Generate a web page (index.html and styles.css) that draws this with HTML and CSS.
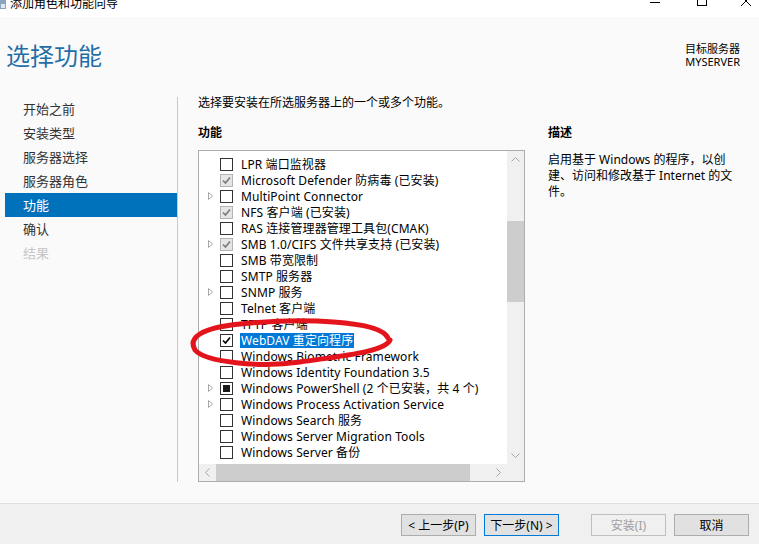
FILE: index.html
```html
<!DOCTYPE html>
<html lang="zh-CN">

<head>
    <meta charset="UTF-8">
    <meta name="viewport" content="width=device-width, initial-scale=1.0">
    <title>添加角色和功能向导</title>
    <link rel="stylesheet" href="styles.css">
</head>

<body>
    <div class="window">
        <!-- 标题栏 (上半部分被截掉) -->
        <div class="titlebar">
            <svg class="app-icon" width="6" height="9" viewBox="0 0 6 9">
                <rect x="0" y="0" width="6" height="9" fill="#8aa4bd" />
                <rect x="1" y="4" width="4" height="4" fill="#dfe8f0" />
            </svg>
            <span class="title-text">添加角色和功能向导</span>
            <svg class="controls" width="119" height="17" viewBox="0 0 119 17">
                <line x1="10" y1="2.5" x2="20" y2="2.5" stroke="#000" stroke-width="1" />
                <rect x="57.5" y="-4.5" width="9" height="10" fill="none" stroke="#000" stroke-width="1" />
                <line x1="101" y1="-4" x2="111" y2="6" stroke="#000" stroke-width="1" />
                <line x1="111" y1="-4" x2="101" y2="6" stroke="#000" stroke-width="1" />
            </svg>
        </div>

        <div class="header">
            <h1 class="page-title">选择功能</h1>
            <div class="target">
                <div>目标服务器</div>
                <div>MYSERVER</div>
            </div>
        </div>

        <div class="main">
            <ul class="steps">
                <li class="step">开始之前</li>
                <li class="step">安装类型</li>
                <li class="step">服务器选择</li>
                <li class="step">服务器角色</li>
                <li class="step active">功能</li>
                <li class="step">确认</li>
                <li class="step disabled">结果</li>
            </ul>

            <div class="content">
                <p class="intro">选择要安装在所选服务器上的一个或多个功能。</p>
                <div class="columns">
                    <div class="features">
                        <h2 class="label">功能</h2>
                        <div class="listbox">
                            <ul class="items">
                                <li class="row"><span class="exp"></span><span class="box"></span><span class="text">LPR 端口监视器</span></li>
                                <li class="row"><span class="exp"></span><span class="box done"><svg viewBox="0 0 11 11"><polyline points="2,5.5 4.5,8 9,2.5" /></svg></span><span class="text">Microsoft Defender 防病毒 (已安装)</span></li>
                                <li class="row"><span class="exp"><svg viewBox="0 0 5 8"><polygon points="0.5,0.5 4.5,4 0.5,7.5" /></svg></span><span class="box"></span><span class="text">MultiPoint Connector</span></li>
                                <li class="row"><span class="exp"></span><span class="box done"><svg viewBox="0 0 11 11"><polyline points="2,5.5 4.5,8 9,2.5" /></svg></span><span class="text">NFS 客户端 (已安装)</span></li>
                                <li class="row"><span class="exp"></span><span class="box"></span><span class="text">RAS 连接管理器管理工具包(CMAK)</span></li>
                                <li class="row"><span class="exp"><svg viewBox="0 0 5 8"><polygon points="0.5,0.5 4.5,4 0.5,7.5" /></svg></span><span class="box done"><svg viewBox="0 0 11 11"><polyline points="2,5.5 4.5,8 9,2.5" /></svg></span><span class="text">SMB 1.0/CIFS 文件共享支持 (已安装)</span></li>
                                <li class="row"><span class="exp"></span><span class="box"></span><span class="text">SMB 带宽限制</span></li>
                                <li class="row"><span class="exp"></span><span class="box"></span><span class="text">SMTP 服务器</span></li>
                                <li class="row"><span class="exp"><svg viewBox="0 0 5 8"><polygon points="0.5,0.5 4.5,4 0.5,7.5" /></svg></span><span class="box"></span><span class="text">SNMP 服务</span></li>
                                <li class="row"><span class="exp"></span><span class="box"></span><span class="text">Telnet 客户端</span></li>
                                <li class="row"><span class="exp"></span><span class="box"></span><span class="text">TFTP 客户端</span></li>
                                <li class="row"><span class="exp"></span><span class="box on"><svg viewBox="0 0 11 11"><polyline points="2,5.5 4.5,8 9,2.5" /></svg></span><span class="text selected">WebDAV 重定向程序</span></li>
                                <li class="row"><span class="exp"></span><span class="box"></span><span class="text">Windows Biometric Framework</span></li>
                                <li class="row"><span class="exp"></span><span class="box"></span><span class="text">Windows Identity Foundation 3.5</span></li>
                                <li class="row"><span class="exp"><svg viewBox="0 0 5 8"><polygon points="0.5,0.5 4.5,4 0.5,7.5" /></svg></span><span class="box mixed"></span><span class="text">Windows PowerShell (2 个已安装，共 4 个)</span></li>
                                <li class="row"><span class="exp"><svg viewBox="0 0 5 8"><polygon points="0.5,0.5 4.5,4 0.5,7.5" /></svg></span><span class="box"></span><span class="text">Windows Process Activation Service</span></li>
                                <li class="row"><span class="exp"></span><span class="box"></span><span class="text">Windows Search 服务</span></li>
                                <li class="row"><span class="exp"></span><span class="box"></span><span class="text">Windows Server Migration Tools</span></li>
                                <li class="row"><span class="exp"></span><span class="box"></span><span class="text">Windows Server 备份</span></li>
                            </ul>

                            <div class="vscroll">
                                <span class="arrow"><svg width="9" height="5" viewBox="0 0 9 5"><polyline points="0.5,4.5 4.5,0.5 8.5,4.5" /></svg></span>
                                <div class="vtrack"><div class="vthumb"></div></div>
                                <span class="arrow"><svg width="9" height="5" viewBox="0 0 9 5"><polyline points="0.5,0.5 4.5,4.5 8.5,0.5" /></svg></span>
                            </div>
                            <div class="hscroll">
                                <span class="arrow"><svg width="5" height="9" viewBox="0 0 5 9"><polyline points="4.5,0.5 0.5,4.5 4.5,8.5" /></svg></span>
                                <div class="htrack"><div class="hthumb"></div></div>
                                <span class="arrow"><svg width="5" height="9" viewBox="0 0 5 9"><polyline points="0.5,0.5 4.5,4.5 0.5,8.5" /></svg></span>
                            </div>
                            <div class="corner"></div>
                        </div>
                    </div>

                    <div class="desc">
                        <h2 class="label">描述</h2>
                        <p class="desc-text">启用基于 Windows 的程序，以创<br>建、访问和修改基于 Internet 的文<br>件。</p>
                    </div>
                </div>
            </div>
        </div>

        <div class="footer">
            <button class="btn">&lt; 上一步(P)</button>
            <button class="btn focus">下一步(N) &gt;</button>
            <button class="btn off">安装(I)</button>
            <button class="btn">取消</button>
        </div>

        <!-- 手画的红圈 -->
        <svg class="annotation" width="220" height="65" viewBox="0 0 220 65">
            <path d="M 208 28 C 200 10, 120 8, 60 14 C 20 18, 8 28, 15 40 C 25 52, 80 58, 120 52 C 160 46, 205 42, 210 30" />
        </svg>
    </div>
</body>

</html>
```

FILE: styles.css
```css
* {
    margin: 0;
    padding: 0;
    box-sizing: border-box;
}

li {
    list-style: none;
}

body {
    width: 759px;
    height: 544px;
    overflow: hidden;
    font-family: "Noto Sans", "Noto Sans CJK SC", sans-serif;
    font-size: 12px;
    color: #000;
    background: #fafafa;
}

.window {
    position: relative;
    width: 759px;
    height: 544px;
    display: flex;
    flex-direction: column;
}

/* 标题栏 */
.titlebar {
    height: 17px;
    background: #fff;
    display: flex;
    align-items: flex-start;
    overflow: hidden;
}

.title-text {
    margin-left: 4px;
    margin-top: -2px;
    line-height: 12px;
    font-size: 12px;
}

.controls {
    margin-left: auto;
}

/* 页头 */
.header {
    height: 78px;
    display: flex;
    justify-content: space-between;
    align-items: flex-start;
    padding: 25px 19px 0 6px;
}

.page-title {
    font-size: 24px;
    line-height: 28px;
    font-weight: normal;
    color: #1f6ea6;
}

.target {
    text-align: right;
    font-size: 11px;
    line-height: 13px;
}

/* 主体 */
.main {
    height: 387px;
    display: flex;
}

.steps {
    width: 173px;
    margin-left: 5px;
    margin-top: 2px;
    border-right: 1px solid #c8c8c8;
    font-size: 13px;
    color: #333;
}

.step {
    height: 24px;
    line-height: 24px;
    padding-left: 18px;
}

.step.active {
    background: #0072bc;
    color: #fff;
}

.step.disabled {
    color: #c6c6c6;
}

.content {
    padding-left: 20px;
    flex: 1;
}

.intro {
    line-height: 16px;
}

.columns {
    display: flex;
    margin-top: 14px;
}

.label {
    font-size: 12px;
    font-weight: bold;
    line-height: 16px;
}

.features {
    width: 327px;
}

.listbox {
    margin-top: 9px;
    height: 332px;
    border: 1px solid #adadad;
    background: #fff;
    display: grid;
    grid-template-columns: 1fr 17px;
    grid-template-rows: 1fr 17px;
    overflow: hidden;
}

.items {
    padding-top: 5px;
    overflow: hidden;
}

.row {
    height: 16px;
    display: flex;
    align-items: center;
    padding-left: 9px;
    white-space: nowrap;
}

.exp {
    width: 12px;
    height: 8px;
    display: flex;
}

.exp svg {
    width: 5px;
    height: 8px;
    fill: none;
    stroke: #a6a6a6;
    stroke-width: 1;
}

.box {
    width: 13px;
    height: 13px;
    border: 1px solid #333;
    background: #fff;
    display: flex;
    align-items: center;
    justify-content: center;
    flex-shrink: 0;
}

.box svg {
    width: 11px;
    height: 11px;
    fill: none;
    stroke: #000;
    stroke-width: 1.6;
}

.box.done {
    border-color: #b4b4b4;
    background: #e6e6e6;
}

.box.done svg {
    stroke: #7a7a7a;
}

.box.mixed::after {
    content: "";
    width: 7px;
    height: 7px;
    background: #1a1a1a;
}

.text {
    margin-left: 8px;
    line-height: 15px;
    letter-spacing: 0.1px;
}

.text.selected {
    margin-left: 7px;
    padding: 0 1px;
    background: #0078d7;
    color: #fff;
}

/* 滚动条 */
.vscroll,
.hscroll,
.corner {
    background: #f0f0f0;
}

.vscroll {
    display: flex;
    flex-direction: column;
}

.hscroll {
    display: flex;
}

.arrow {
    width: 17px;
    height: 17px;
    display: flex;
    align-items: center;
    justify-content: center;
    flex-shrink: 0;
}

.arrow svg {
    fill: none;
    stroke: #a6a6a6;
    stroke-width: 1;
}

.vtrack,
.htrack {
    flex: 1;
}

.vthumb {
    margin-top: 53px;
    height: 81px;
    background: #cdcdcd;
}

.htrack {
    display: flex;
}

.hthumb {
    width: 254px;
    background: #cdcdcd;
}

.desc {
    margin-left: 23px;
    width: 200px;
}

.desc-text {
    margin-top: 11px;
    line-height: 16px;
    white-space: nowrap;
}

/* 底部按钮 */
.footer {
    margin-top: 21px;
    flex: 1;
    border-top: 1px solid #dfdfdf;
    background: #f0f0f0;
    display: flex;
    justify-content: flex-end;
    align-items: flex-start;
    padding: 10px 10px 0 0;
}

.btn {
    width: 75px;
    height: 22px;
    margin-left: 8px;
    border: 1px solid #adadad;
    background: #e1e1e1;
    font-family: inherit;
    font-size: 12px;
    color: #000;
}

.btn.focus {
    border-color: #0078d7;
}

.btn.off {
    margin-left: 32px;
    border-color: #bfbfbf;
    background: #f0f0f0;
    color: #a0a0a0;
}

/* 红色标注圈 */
.annotation {
    position: absolute;
    left: 180px;
    top: 310px;
    pointer-events: none;
}

.annotation path {
    fill: none;
    stroke: #e3141c;
    stroke-width: 5;
    stroke-linecap: round;
}
```
